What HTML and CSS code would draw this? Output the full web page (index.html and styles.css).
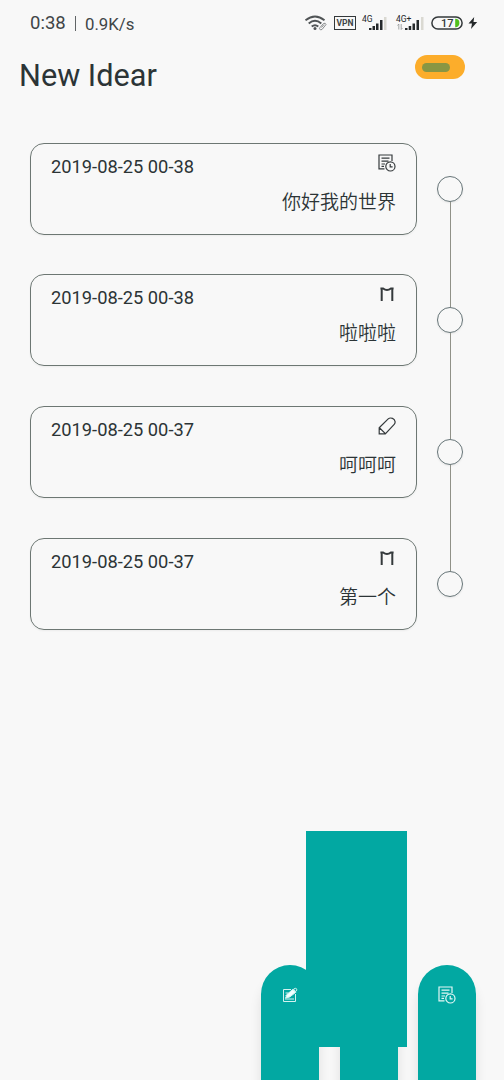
FILE: index.html
```
<!DOCTYPE html>
<html lang="zh-CN">
<head>
<meta charset="utf-8">
<title>New Idear</title>
<link rel="stylesheet" href="styles.css">
</head>
<body>
<svg class="defs" width="0" height="0">
  <symbol id="note" viewBox="0 0 18 18">
    <path d="M6.5 14.8H1V1h13v6M3.5 4.2h8M3.5 7.2h7M3.5 10h3.5M3.5 12.3h2.5"/>
    <circle cx="12.4" cy="12.4" r="4.6"/>
    <path d="M12.2 9.9v2.900h2.400"/>
  </symbol>
  <symbol id="mark" viewBox="0 0 18 18">
    <path class="bold" d="M3.700 16V4.200M2.400 3.500h2.700Q9 6.600 12.900 3.500h2.700M14.300 4.200V16"/>
  </symbol>
  <symbol id="pencil" viewBox="0 0 18 18">
    <path d="M1.200 10.700 10.200 1.900q1.700-1.500 4.300-.500 2.200 1 2.600 3.200.200 1.700-.9 2.800L7.300 16.900H1.200ZM1.400 10.800l6 5.800"/>
  </symbol>
  <symbol id="edit" viewBox="0 0 16 16">
    <path d="M9 2.500H1.500v12h12V7M3.500 6h3M3.500 8.500h2M3 12h9"/>
    <path class="solid" d="m3.500 11.200 1.600-3.900 6-5.100 2.700 3.100-6 4.600Z"/>
    <circle cx="13.300" cy="2.800" r="1.500"/>
  </symbol>
</svg>
<div class="screen">
  <header class="status">
    <span class="clock">0:38</span><span class="divider"></span><span class="rate">0.9K/s</span>
    <svg class="wifi" width="23" height="16" viewBox="0 0 23 16">
      <path d="M.500 5.300Q10-2.300 19.500 5.300M3.700 8.500q6.300-5.400 12.600 0M6.700 11.500q3.300-2.700 6.600 0"/>
      <circle cx="10" cy="13.600" r="1.500"/>
      <path class="link" d="m15 12.500 3.500-4q2-1 2.500 1l-4 5q-2 1-2.500-.700ZM16.500 12.500l2.500-3"/>
    </svg>
    <span class="vpn">VPN</span>
    <div class="signal first">
      <span>4G</span>
      <svg width="26" height="14" viewBox="0 0 26 14"><path d="M7 12h2.500v2H7ZM10.500 10h2.500v4h-2.500ZM14 7.500h2.500V14H14ZM18 4h2.500v10H18Z"/><path class="off" d="M22 1h2.500v13H22Z"/></svg>
    </div>
    <div class="signal second">
      <span>4G+</span>
      <svg width="28" height="14" viewBox="0 0 28 14"><path d="M9 12h2.500v2H9ZM12.700 10h2.500v4h-2.500ZM16.500 7.500H19V14h-2.500ZM20.500 4H23v10h-2.500Z"/><path class="off" d="M25 1h2.500v13H25Z"/><path class="arrows" d="M2.800 13.500V8L1.500 9.500M5.200 8v5.500L6.500 12"/></svg>
    </div>
    <svg class="battery" width="32" height="14" viewBox="0 0 32 14">
      <rect x=".900" y=".900" width="30.200" height="12.200" rx="6.100"/>
      <path d="M24.200 2.800H25q3.400.600 3.400 4.200T25 11.200h-.800Z"/>
      <text x="10" y="11">17</text>
    </svg>
    <svg class="bolt" width="10" height="14" viewBox="0 0 10 14"><path d="M6.200 1 .500 7.500H4L3 13l6.200-7H5.500Z"/></svg>
  </header>
  <div class="heading">
    <h1>New Idear</h1>
    <div class="toggle"><span></span></div>
  </div>
  <main class="ideas">
    <article class="idea">
      <div class="card"><div class="top"><time>2019-08-25 00-38</time><svg class="icon"><use href="#note"/></svg></div><p>你好我的世界</p></div>
      <span class="node"></span>
    </article>
    <article class="idea">
      <div class="card"><div class="top"><time>2019-08-25 00-38</time><svg class="icon"><use href="#mark"/></svg></div><p>啦啦啦</p></div>
      <span class="node"></span>
    </article>
    <article class="idea">
      <div class="card"><div class="top"><time>2019-08-25 00-37</time><svg class="icon"><use href="#pencil"/></svg></div><p>呵呵呵</p></div>
      <span class="node"></span>
    </article>
    <article class="idea">
      <div class="card"><div class="top"><time>2019-08-25 00-37</time><svg class="icon"><use href="#mark"/></svg></div><p>第一个</p></div>
      <span class="node"></span>
    </article>
  </main>
  <nav class="actions">
    <div class="tab"><svg class="edit"><use href="#edit"/></svg></div>
    <div class="tab"></div>
    <div class="tab"><svg class="icon"><use href="#note"/></svg></div>
    <div class="panel"></div>
  </nav>
</div>
</body>
</html>
```

FILE: styles.css
```
* { box-sizing: border-box; }
body { margin: 0; background: #f8f8f8; color: #2c3436; font-family: Roboto, "Noto Sans CJK SC", sans-serif; }
.defs { position: absolute; }
.screen { width: 504px; height: 1080px; display: flex; flex-direction: column; overflow: hidden; }
svg { flex: none; }

.status { height: 46px; padding-left: 30px; display: flex; align-items: center; color: #404547; white-space: nowrap; }
.clock { width: 37px; font-size: 18.500px; }
.divider { width: 1px; height: 15px; margin: 0 9px 0 8px; background: #606466; }
.rate { width: 220px; font-size: 16.800px; padding-top: 1px; }
.wifi { fill: none; stroke: #505456; stroke-width: 1.900; }
.wifi circle { fill: #505456; stroke: none; }
.wifi .link { stroke: #888b8c; stroke-width: 1; }
.vpn { width: 22px; height: 14px; margin-left: 6px; border: 1.500px solid #33383a; font: bold 8.500px/12px Roboto, sans-serif; text-align: center; }
.signal { height: 14px; position: relative; fill: #25292b; }
.signal svg { display: block; }
.signal span { position: absolute; left: 0; top: -1px; font: 8.500px/8px Roboto, sans-serif; color: #25292b; }
.signal.first { margin-left: 6px; }
.signal.second { margin-left: 8px; }
.signal .off { fill: #dad9d2; }
.signal .arrows { fill: none; stroke: #909394; stroke-width: .800; }
.battery { margin-left: 7px; fill: none; stroke: #33383a; stroke-width: 1.500; }
.battery path { fill: #50c01c; stroke: none; }
.battery text { fill: #33383a; stroke: none; font: 500 11px Roboto, sans-serif; }
.bolt { margin-left: 5px; fill: #25292b; }

.heading { height: 97px; padding: 9px 39px 0 19px; display: flex; justify-content: space-between; align-items: flex-start; }
h1 { margin: 0; font-size: 30.700px; line-height: 42px; font-weight: 400; }
.toggle { width: 50px; height: 24px; padding: 7.500px 7px; border-radius: 12px; background: #fcad2b; }
.toggle span { display: block; width: 28px; height: 9px; border-radius: 4.500px; background: #899643; }

.ideas { padding: 0 41px 0 30px; display: flex; flex-direction: column; gap: 40px; }
.idea { height: 91.600px; display: flex; justify-content: space-between; align-items: center; }
.card { width: 387px; height: 92px; padding: 10px 20px 0; border: 1px solid #6d7773; border-radius: 14px; box-shadow: 0 1px 2px #0000000d; }
.top { height: 26px; display: flex; justify-content: space-between; }
time { font-size: 18.300px; line-height: 25px; }
.icon { width: 18px; height: 18px; fill: none; stroke: #353a3c; stroke-width: 1.200; }
.bold { stroke-width: 2; }
.card p { margin: 9px 0 0; font-size: 19px; line-height: 28px; font-weight: 350; text-align: right; }
.node { width: 26px; height: 26px; border: 1px solid #667477; border-radius: 50%; box-shadow: 0 1px 2px #00000012; position: relative; }
.idea:not(:last-child) .node::after { content: ""; position: absolute; left: 12px; top: 25px; width: 1px; height: 105.600px; background: #909188; }

.actions { width: 215px; height: 115px; margin: auto 28px 0 auto; display: flex; justify-content: space-between; position: relative; }
.tab { width: 58px; height: 140px; padding-top: 20.500px; border-radius: 29px 29px 0 0; background: #02a8a2; box-shadow: 0 12px 12px #0000001a; display: flex; justify-content: center; }
.tab .icon { stroke: #e4f7f6; }
.edit { width: 16px; height: 16px; margin-top: 1px; fill: none; stroke: #d3f2f0; stroke-width: 1; }
.solid { fill: #f0ffff; }
.panel { position: absolute; left: 45px; top: -134px; width: 101px; height: 216px; background: #02a8a2; }
```
